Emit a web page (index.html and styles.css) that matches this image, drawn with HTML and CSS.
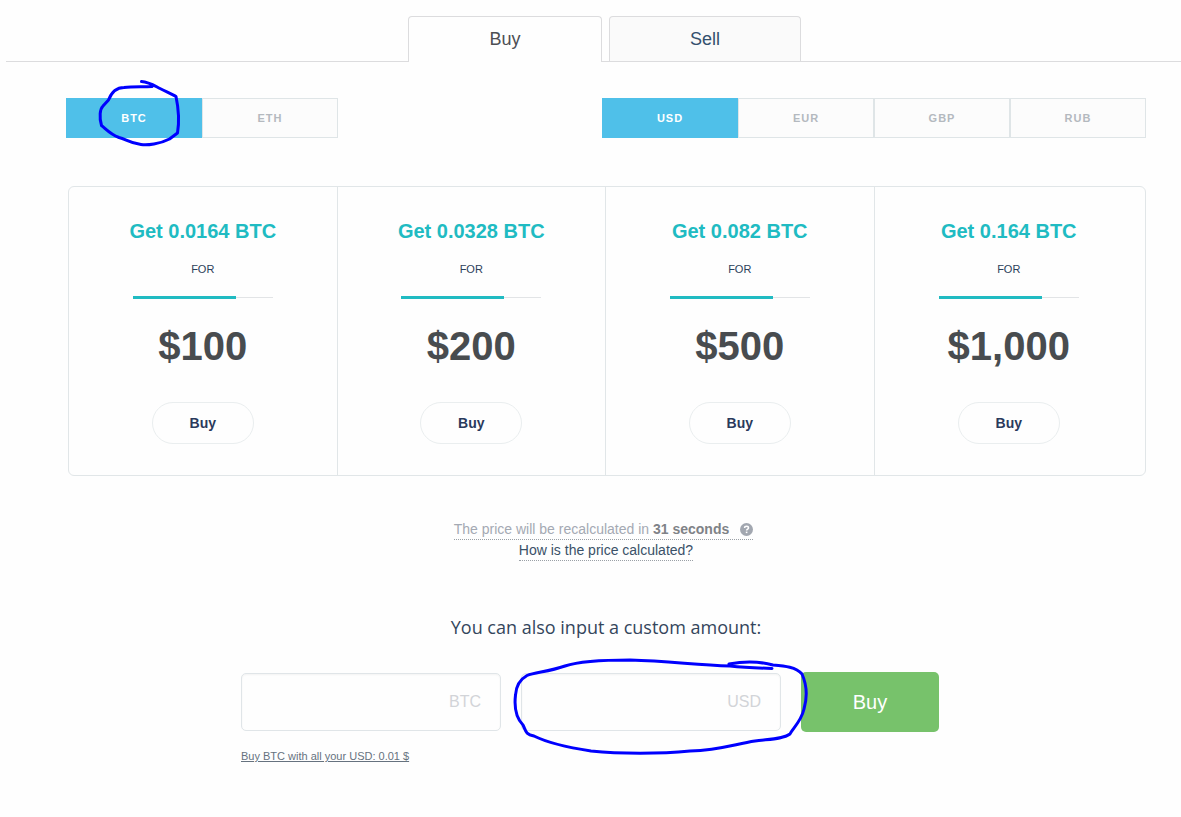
FILE: index.html
```html
<!DOCTYPE html>
<html lang="en">
<head>
<meta charset="utf-8">
<title>Buy and sell</title>
<link rel="stylesheet" href="styles.css">
</head>
<body>
<nav class="tabs">
  <button class="tab tab-active" type="button">Buy</button>
  <button class="tab" type="button">Sell</button>
</nav>
<main class="content">
  <div class="filters">
    <div class="switch">
      <button class="option option-active" type="button">BTC</button>
      <button class="option" type="button">ETH</button>
    </div>
    <div class="switch">
      <button class="option option-active" type="button">USD</button>
      <button class="option" type="button">EUR</button>
      <button class="option" type="button">GBP</button>
      <button class="option" type="button">RUB</button>
    </div>
  </div>

  <section class="cards">
    <article class="card">
      <h2 class="card-title">Get 0.0164 BTC</h2>
      <p class="card-for">FOR</p>
      <div class="rule"><div class="rule-fill"></div></div>
      <p class="card-price">$100</p>
      <button class="card-buy" type="button">Buy</button>
    </article>
    <article class="card">
      <h2 class="card-title">Get 0.0328 BTC</h2>
      <p class="card-for">FOR</p>
      <div class="rule"><div class="rule-fill"></div></div>
      <p class="card-price">$200</p>
      <button class="card-buy" type="button">Buy</button>
    </article>
    <article class="card">
      <h2 class="card-title">Get 0.082 BTC</h2>
      <p class="card-for">FOR</p>
      <div class="rule"><div class="rule-fill"></div></div>
      <p class="card-price">$500</p>
      <button class="card-buy" type="button">Buy</button>
    </article>
    <article class="card">
      <h2 class="card-title">Get 0.164 BTC</h2>
      <p class="card-for">FOR</p>
      <div class="rule"><div class="rule-fill"></div></div>
      <p class="card-price">$1,000</p>
      <button class="card-buy" type="button">Buy</button>
    </article>
  </section>

  <section class="notes">
    <div class="note note-timer">
      <span>The price will be recalculated in <b class="note-time">31 seconds</b></span>
      <svg class="help" viewBox="0 0 13 13" aria-hidden="true">
        <circle cx="6.5" cy="6.5" r="6.5" fill="#a2a7b0"/>
        <path d="M4.6 5.1C4.6 3.8 5.4 3.2 6.5 3.2S8.5 3.9 8.5 4.9C8.5 6.2 6.6 6.2 6.6 7.6" fill="none" stroke="#fff" stroke-width="1.5"/>
        <path d="M5.8 8.6h1.6v1.5H5.8z" fill="#fff"/>
      </svg>
    </div>
    <a class="note note-link" href="#">How is the price calculated?</a>
  </section>

  <h1 class="custom-title">You can also input a custom amount:</h1>
  <form class="custom">
    <div class="custom-row">
      <input class="amount" type="text" placeholder="BTC" aria-label="Amount in BTC">
      <input class="amount" type="text" placeholder="USD" aria-label="Amount in USD">
      <button class="submit" type="button">Buy</button>
    </div>
    <a class="all-in" href="#">Buy BTC with all your USD: 0.01 $</a>
  </form>
</main>

<svg class="ink" width="1181" height="817" viewBox="0 0 1181 817" aria-hidden="true">
  <path d="M141.500 81.500C149 82 155 86 160 88.500C167 92 172 94 176 96.500C178 106 179.500 121 177.500 133L169.500 139C160 144 147 145.500 141 144.500C129 143 126 139 119 137.500C110 134 106 129 101.500 125.500C99 117 100 109 103 106L108.500 100C112 91 118 87.500 124 87.500C133 86.500 142 87 152 86.500"/>
  <path d="M772 668.500C758 668 745 667.500 730 666C695 665 670 661 630 660C600 660 580 661 565 666C548 672 535 672 527 675.500C519 680 516 687 515.500 695C514 708 517 719 523 725C526 731 525 734 534 736C548 743 565 747 591 751C620 754 660 754 690 751C720 750 735 744 755 741C770 739 783 739 790 734C792 729 801 722 804 709C808 695 806 683 802 674C796 667 785 666 773 665C758 661 740 662 729 664"/>
</svg>
</body>
</html>
```

FILE: styles.css
```css
* {
  box-sizing: border-box;
}

body {
  margin: 0;
  background: #fefefe;
  color: #2c405a;
  font-family: "Liberation Sans", Arial, sans-serif;
}

button,
input {
  font-family: inherit;
  margin: 0;
}

h1,
h2,
p {
  margin: 0;
}

.tabs {
  display: flex;
  justify-content: center;
  gap: 7px;
  margin: 16px 0 0 6px;
  padding-left: 22px;
  border-bottom: 1px solid #dcdcde;
}

.tab {
  width: 192px;
  height: 45px;
  border: 1px solid #dcdcde;
  border-bottom: 0;
  border-radius: 4px 4px 0 0;
  background: #fafafa;
  color: #34506e;
  font-size: 18px;
}

.tab-active {
  width: 194px;
  height: 46px;
  margin-bottom: -1px;
  background: #fefefe;
  color: #4d4f54;
}

.content {
  padding: 36px 35px 0 66px;
}

.filters {
  display: flex;
  justify-content: space-between;
}

.switch {
  display: flex;
}

.option {
  width: 136px;
  height: 40px;
  border: 1px solid #dfe5e7;
  background: #fcfcfc;
  color: #b4b9bf;
  font-size: 11px;
  font-weight: bold;
  letter-spacing: 1px;
}

.option-active {
  border-color: #4fc0e9;
  background: #4fc0e9;
  color: #fff;
}

.cards {
  display: grid;
  grid-template-columns: repeat(4, 1fr);
  margin: 48px 0 0 2px;
  padding-right: 2px;
  border: 1px solid #e1e6e8;
  border-radius: 6px;
}

.card {
  display: flex;
  flex-direction: column;
  align-items: center;
  padding: 32px 0 31px;
  border-right: 1px solid #e1e6e8;
}

.card:last-child {
  border-right: 0;
}

.card-title {
  color: #20bbc2;
  font-size: 20px;
  line-height: 24px;
}

.card-for {
  margin-top: 18px;
  font-size: 11px;
  line-height: 16px;
}

.rule {
  width: 140px;
  height: 3px;
  margin-top: 19px;
  background: linear-gradient(#e2e4e6, #e2e4e6) 0 1px / 100% 1px no-repeat;
}

.rule-fill {
  width: 103px;
  height: 3px;
  background: #20bbc2;
}

.card-price {
  margin-top: 23px;
  color: #484c4f;
  font-size: 40px;
  font-weight: bold;
  line-height: 48px;
}

.card-buy {
  width: 102px;
  height: 42px;
  margin-top: 32px;
  border: 1px solid #eaeeef;
  border-radius: 21px;
  background: #fefefe;
  color: #2a3a5c;
  font-size: 14px;
  font-weight: bold;
}

.notes {
  display: flex;
  flex-direction: column;
  align-items: center;
  margin-top: 43px;
}

.note {
  display: flex;
  align-items: center;
  gap: 11px;
  border-bottom: 1px dotted #9aa0a6;
  color: #a4a9b3;
  font-size: 14px;
  line-height: 20px;
}

.note-timer {
  margin-right: 5px;
}

.note-time {
  color: #7f8287;
}

.note-link {
  color: #3a5168;
  text-decoration: none;
}

.help {
  width: 13px;
  height: 13px;
}

.custom-title {
  margin-top: 54px;
  color: #34465c;
  font-family: "Open Sans", sans-serif;
  font-size: 18px;
  font-weight: normal;
  line-height: 24px;
  text-align: center;
}

.custom {
  display: flex;
  flex-direction: column;
  align-items: flex-start;
  gap: 18px;
  width: fit-content;
  margin: 33px auto 0;
  padding-right: 32px;
}

.custom-row {
  display: flex;
  align-items: center;
  gap: 20px;
}

.amount {
  width: 260px;
  height: 58px;
  padding: 0 19px;
  border: 1px solid #e0e5e8;
  border-radius: 5px;
  background: #fefefe;
  box-shadow: inset 0 1px 2px #f3f3f3;
  font-size: 16px;
  text-align: right;
}

.amount::placeholder {
  color: #d2d4d8;
}

.submit {
  width: 138px;
  height: 60px;
  border: 0;
  border-radius: 5px;
  background: #77c26b;
  color: #fff;
  font-size: 20px;
}

.all-in {
  color: #66727f;
  font-size: 11px;
  line-height: 13px;
}

.ink {
  position: absolute;
  top: 0;
  left: 0;
  pointer-events: none;
  fill: none;
  stroke: #0000fe;
  stroke-width: 3;
  stroke-linecap: round;
  stroke-linejoin: round;
}
```
